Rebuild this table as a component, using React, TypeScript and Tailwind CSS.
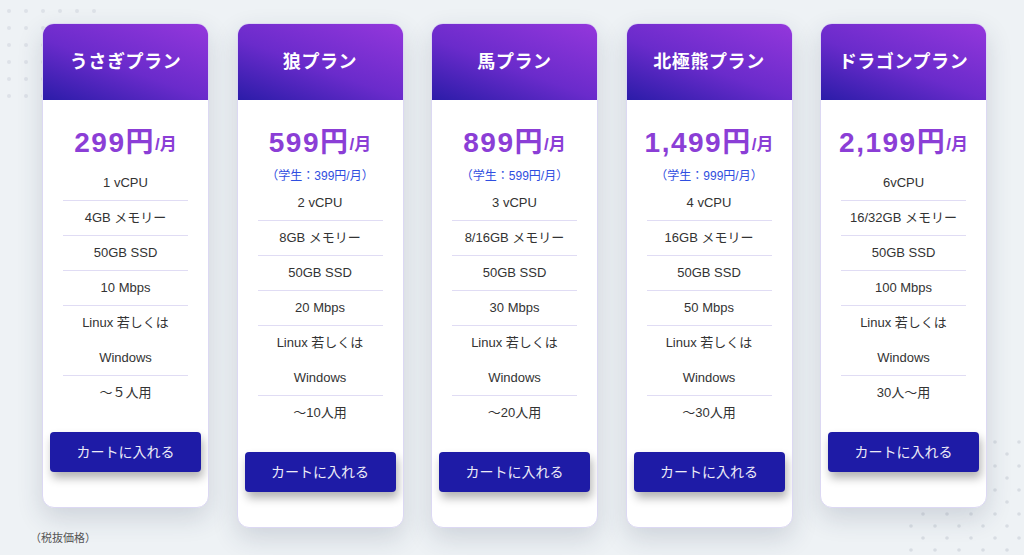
import React from "react";

type Plan = {
  name: string;
  price: string;
  student?: string;
  rows: string[][];
};

const plans: Plan[] = [
  {
    name: "うさぎプラン",
    price: "299",
    rows: [["1 vCPU"], ["4GB メモリー"], ["50GB SSD"], ["10 Mbps"], ["Linux 若しくは", "Windows"], ["〜５人用"]],
  },
  {
    name: "狼プラン",
    price: "599",
    student: "（学生：399円/月）",
    rows: [["2 vCPU"], ["8GB メモリー"], ["50GB SSD"], ["20 Mbps"], ["Linux 若しくは", "Windows"], ["〜10人用"]],
  },
  {
    name: "馬プラン",
    price: "899",
    student: "（学生：599円/月）",
    rows: [["3 vCPU"], ["8/16GB メモリー"], ["50GB SSD"], ["30 Mbps"], ["Linux 若しくは", "Windows"], ["〜20人用"]],
  },
  {
    name: "北極熊プラン",
    price: "1,499",
    student: "（学生：999円/月）",
    rows: [["4 vCPU"], ["16GB メモリー"], ["50GB SSD"], ["50 Mbps"], ["Linux 若しくは", "Windows"], ["〜30人用"]],
  },
  {
    name: "ドラゴンプラン",
    price: "2,199",
    rows: [["6vCPU"], ["16/32GB メモリー"], ["50GB SSD"], ["100 Mbps"], ["Linux 若しくは", "Windows"], ["30人〜用"]],
  },
];

function Dots() {
  const tl: React.ReactElement[] = [];
  for (let i = 0; i < 6; i++) {
    for (let j = 0; j < 6; j++) {
      tl.push(<circle key={`tl-${i}-${j}`} cx={9 + 17 * i} cy={11 + 17 * j} r={2} fill="#dde2e8" />);
    }
  }
  const br: React.ReactElement[] = [];
  for (let k = 0; k < 10; k++) {
    const y = 442 + 12 * k;
    const start = k % 2 === 0 ? 923 : 911;
    for (let x = start; x < 1024; x += 24) {
      br.push(<circle key={`br-${k}-${x}`} cx={x} cy={y} r={1.8} fill="#d8dde3" />);
    }
  }
  return (
    <svg className="absolute left-0 top-0" width={1024} height={555} viewBox="0 0 1024 555">
      {tl}
      {br}
    </svg>
  );
}

function Card({ plan }: { plan: Plan }) {
  return (
    <div className="w-[167px] shrink-0 overflow-hidden rounded-[12px] border border-[#dcd8f3] bg-white shadow-[0_10px_26px_rgba(40,50,80,0.16)]">
      <div className="flex h-[76px] items-center justify-center bg-[linear-gradient(200deg,#9437dc_0%,#6a2bcb_55%,#2b1ca8_100%)] text-[18px] font-bold tracking-[0.6px] text-white">
        {plan.name}
      </div>
      <div className="flex h-[66px] items-end justify-center pb-[3px] font-bold text-[#8b3ed6]">
        <div className="flex h-[40px] items-center">
          <span className="text-[28px] leading-[40px] tracking-[1.5px]">{plan.price}円</span>
          <span className="mt-[4px] text-[17px] leading-[40px]">/月</span>
        </div>
      </div>
      {plan.student && (
        <div className="text-center text-[12px] leading-[20px] text-[#2f4ee0]">{plan.student}</div>
      )}
      <div className="px-[20px]">
        {plan.rows.map((r, i) => (
          <div
            key={i}
            className={
              (i < plan.rows.length - 1 ? "border-b border-[#e0dcf4] " : "") +
              (r.length > 1
                ? "text-center text-[13px] leading-[34.5px] text-[#333]"
                : "text-center text-[13px] leading-[34px] text-[#333]")
            }
          >
            {r.map((line, j) => (
              <div key={j}>{line}</div>
            ))}
          </div>
        ))}
      </div>
      <div className="mx-[7px] mt-[22px] mb-[35px] flex h-[40px] items-center justify-center rounded-[4px] bg-[#1e1ba6] text-[14px] text-[#ecebf7] shadow-[2px_6px_10px_rgba(0,0,0,0.3)]">
        カートに入れる
      </div>
    </div>
  );
}

export default function App() {
  return (
    <div className="relative h-[555px] w-[1024px] overflow-hidden bg-[#eef2f5] font-['Liberation_Sans','Noto_Sans_CJK_JP',sans-serif]">
      <Dots />
      <div className="relative flex items-start gap-[27.5px] pl-[42px] pt-[23px]">
        {plans.map((p) => (
          <Card key={p.name} plan={p} />
        ))}
      </div>
      <p className="relative pl-[30px] text-[11px] leading-[20px] text-[#555]">（税抜価格）</p>
    </div>
  );
}
